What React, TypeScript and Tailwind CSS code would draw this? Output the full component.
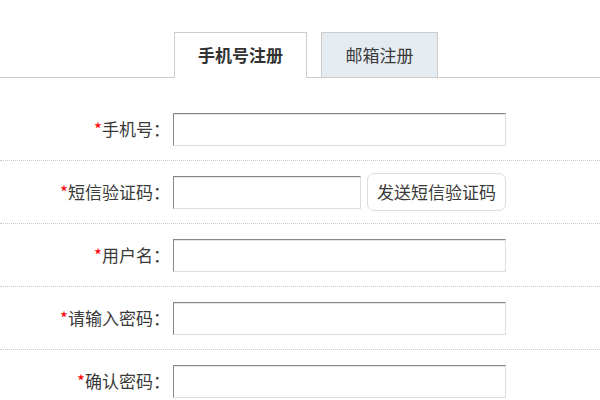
import React from 'react';

const font = { fontFamily: '"Noto Sans CJK SC", "Noto Sans", sans-serif' };

function Field({ label, short }: { label: string; short?: boolean }) {
  return (
    <div className="flex h-[63px] items-center border-b border-dotted border-[#c8c8c8]">
      <label className="w-[170px] text-right text-[17px] text-[#3a3a3a]">
        <span className="text-[#f00]">*</span>
        {label}：
      </label>
      <input
        type="text"
        className={`ml-[3px] h-[33px] border border-t-[#888] border-l-[#888] border-r-[#ddd] border-b-[#ddd] bg-white shadow-[inset_0_1px_0_#e4e4e4] outline-none ${
          short ? 'w-[188px]' : 'w-[333px]'
        }`}
      />
      {short && (
        <button className="ml-[6px] h-[38px] rounded-[7px] border border-[#ddd] bg-white px-[9px] text-[17px] text-[#3a3a3a]">
          发送短信验证码
        </button>
      )}
    </div>
  );
}

export default function App() {
  return (
    <div className="h-[400px] w-[600px] overflow-hidden bg-white" style={font}>
      <div className="flex items-end gap-[14px] border-b border-[#ccc] pl-[174px] pt-[32px]">
        <div className="-mb-px flex h-[46px] w-[133px] items-center justify-center border border-b-white border-[#ccc] bg-white text-[17px] font-bold text-[#333]">
          手机号注册
        </div>
        <div className="flex h-[45px] w-[117px] items-center justify-center border border-b-0 border-[#ccc] bg-[#e4ebf1] text-[17px] text-[#3a3a3a]">
          邮箱注册
        </div>
      </div>
      <div className="pt-[20px]">
        <Field label="手机号" />
        <Field label="短信验证码" short />
        <Field label="用户名" />
        <Field label="请输入密码" />
        <Field label="确认密码" />
      </div>
    </div>
  );
}
